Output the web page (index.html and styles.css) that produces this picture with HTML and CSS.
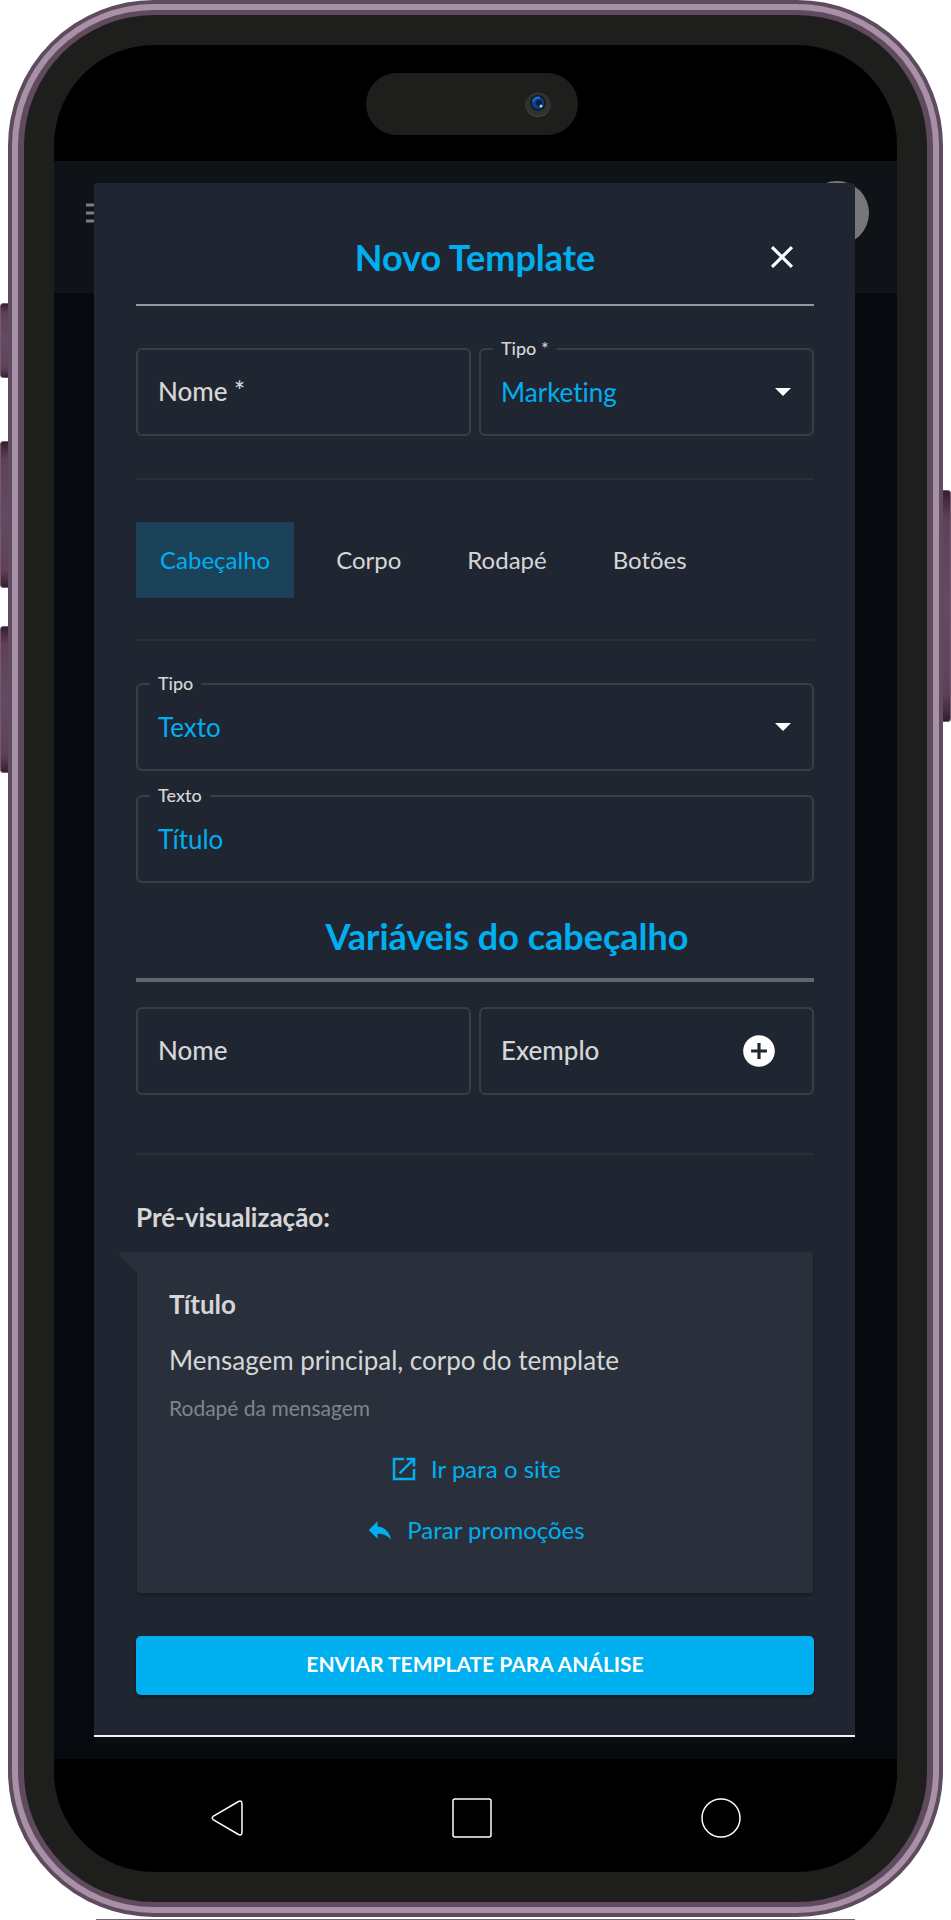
FILE: index.html
```html
<!DOCTYPE html>
<html lang="pt-BR">
<head>
<meta charset="utf-8">
<meta name="viewport" content="width=device-width, initial-scale=1">
<title>Novo Template</title>
<link rel="stylesheet" href="styles.css">
</head>
<body>
<div class="stage">
  <span class="side-key side-key-mute"></span>
  <span class="side-key side-key-up"></span>
  <span class="side-key side-key-down"></span>
  <span class="side-key side-key-power"></span>
  <div class="phone">
    <div class="rim">
      <div class="rim-inner">
        <div class="screen">
          <div class="status">
            <div class="island">
              <svg class="camera" viewBox="0 0 28 28" aria-hidden="true">
                <defs>
                  <linearGradient id="lens" x1="0" y1="0" x2="0" y2="1"><stop offset="0" stop-color="#151515"/><stop offset="1" stop-color="#4a4a49"/></linearGradient>
                </defs>
                <circle cx="14" cy="14" r="13" fill="url(#lens)"/>
                <circle cx="14" cy="14" r="12" fill="#30322f"/>
                <circle cx="14" cy="13" r="8" fill="#151c26"/>
                <circle cx="14" cy="13" r="6" fill="#0c3f8c"/>
                <circle cx="15" cy="13" r="3" fill="#071b45"/>
                <path d="M9 12a5 5 0 0 1 7-4" fill="none" stroke="#1672d8" stroke-width="2"/>
                <circle cx="17" cy="16" r="1.500" fill="#9fdcd8"/>
              </svg>
            </div>
          </div>

          <div class="app">
            <div class="appbar">
              <svg class="menu-icon" viewBox="0 0 27 20" aria-hidden="true"><path d="M0 2h27M0 10h27M0 18h27" stroke="#7c7e80" stroke-width="3"/></svg>
              <span class="avatar"></span>
            </div>

            <form class="modal">
              <header class="modal-head">
                <h1>Novo Template</h1>
                <button class="icon-button close" type="button" aria-label="Fechar">
                  <svg viewBox="0 0 24 24"><path d="M19 6.41 17.59 5 12 10.59 6.41 5 5 6.41 10.59 12 5 17.59 6.41 19 12 13.41 17.59 19 19 17.59 13.41 12z" fill="currentColor"/></svg>
                </button>
              </header>

              <div class="pair">
                <div class="field resting">
                  <input id="nome" type="text" required>
                  <label for="nome">Nome *</label>
                </div>
                <div class="field">
                  <select id="tipo"><option>Marketing</option></select>
                  <label for="tipo">Tipo *</label>
                  <svg class="arrow" viewBox="0 0 16 8" aria-hidden="true"><path d="M0 0h16L8 8z" fill="currentColor"/></svg>
                </div>
              </div>

              <hr>

              <nav class="tabs">
                <button class="tab active" type="button">Cabeçalho</button>
                <button class="tab" type="button">Corpo</button>
                <button class="tab" type="button">Rodapé</button>
                <button class="tab" type="button">Botões</button>
              </nav>

              <hr class="tabs-rule">

              <div class="stack">
                <div class="field">
                  <select id="tipo-cabecalho"><option>Texto</option></select>
                  <label for="tipo-cabecalho">Tipo</label>
                  <svg class="arrow" viewBox="0 0 16 8" aria-hidden="true"><path d="M0 0h16L8 8z" fill="currentColor"/></svg>
                </div>
                <div class="field">
                  <input id="texto" type="text" value="Título">
                  <label for="texto">Texto</label>
                </div>
              </div>

              <h2 class="section-title">Variáveis do cabeçalho</h2>

              <div class="pair variables">
                <div class="field resting">
                  <input id="var-nome" type="text">
                  <label for="var-nome">Nome</label>
                </div>
                <div class="field resting">
                  <input id="var-exemplo" type="text">
                  <label for="var-exemplo">Exemplo</label>
                  <button class="icon-button add" type="button" aria-label="Adicionar">
                    <svg viewBox="0 0 24 24"><path d="M12 2C6.480 2 2 6.480 2 12s4.480 10 10 10 10-4.480 10-10S17.520 2 12 2zm5 11h-4v4h-2v-4H7v-2h4V7h2v4h4v2z" fill="currentColor"/></svg>
                  </button>
                </div>
              </div>

              <hr class="preview-rule">

              <h3 class="preview-title">Pré-visualização:</h3>
              <section class="bubble">
                <svg class="tail" viewBox="0 0 18 22" aria-hidden="true"><path d="M3 0h15v22L1 4Q-1 0 3 0z" fill="currentColor"/></svg>
                <h4>Título</h4>
                <p class="message">Mensagem principal, corpo do template</p>
                <p class="footnote">Rodapé da mensagem</p>
                <div class="actions">
                  <a href="#site">
                    <svg viewBox="0 0 24 24" aria-hidden="true"><path d="M19 19H5V5h7V3H3v18h18v-9h-2v7zM14 3v2h3.590l-9.830 9.830 1.410 1.410L19 6.410V10h2V3h-7z" fill="currentColor"/></svg>
                    <span>Ir para o site</span>
                  </a>
                  <a href="#parar">
                    <svg viewBox="0 0 24 24" aria-hidden="true"><path d="M10 9V5l-7 7 7 7v-4.100c5 0 8.500 1.600 11 5.100-1-5-4-10-11-11z" fill="currentColor"/></svg>
                    <span>Parar promoções</span>
                  </a>
                </div>
              </section>

              <button class="submit" type="submit">ENVIAR TEMPLATE PARA ANÁLISE</button>
            </form>
          </div>

          <div class="navbar">
            <svg class="nav-back" viewBox="0 0 32 40" aria-hidden="true"><path d="M27.500 3.500 2.500 18Q0 20 2.500 22L27.500 36.500Q31 38 31 34V6Q31 2 27.500 3.500z"/></svg>
            <svg class="nav-icon" viewBox="0 0 40 40" aria-hidden="true"><rect x="1" y="1" width="38" height="38" rx="2"/></svg>
            <svg class="nav-icon" viewBox="0 0 40 40" aria-hidden="true"><circle cx="20" cy="20" r="19"/></svg>
          </div>
        </div>
      </div>
    </div>
  </div>
</div>
<div class="edge"></div>
</body>
</html>
```

FILE: styles.css
```css
* { box-sizing: border-box; }

body {
  margin: 0;
  background: #fff;
  color: #d6d6d6;
  font-family: "Futura", Lato, "Open Sans", sans-serif;
  font-size: 26px;
  font-variant-ligatures: none;
  line-height: 32px;
}

h1, h2, h3, h4, p { margin: 0; }

button, input, select { font: inherit; color: inherit; }

/* Device body */
.stage {
  position: relative;
  padding: 0 8px;
}

.phone {
  position: relative;
  border: 4px solid #5f4b5e;
  border-radius: 146px;
  background: #a891a7;
}

.rim {
  margin: 0 1px;
  padding: 6px 5px;
  border-radius: 142px;
}

.rim-inner {
  padding: 30px;
  border: 5px solid #5f4a5e;
  border-width: 5px 6px;
  border-radius: 136px;
  background: #1e1f1c;
}

.screen {
  overflow: hidden;
  border-radius: 100px;
  background: #000;
}

.side-key {
  position: absolute;
  left: 0;
  width: 12px;
  border: 1px solid #735a70;
  border-radius: 3px;
  background: linear-gradient(#35202f, #604059 12%, #634a62 50%, #604059 88%, #35202f);
}

.side-key-mute { top: 303px; height: 75px; }
.side-key-up { top: 441px; height: 147px; }
.side-key-down { top: 626px; height: 147px; }
.side-key-power { top: 490px; right: 0; left: auto; height: 232px; }

.edge {
  height: 1px;
  margin: 2px 96px 0;
  background: #75667a;
}

.status {
  display: flex;
  justify-content: center;
  height: 116px;
  padding-top: 28px;
}

.island {
  display: flex;
  align-items: center;
  justify-content: flex-end;
  width: 212px;
  height: 62px;
  margin-right: 8px;
  padding-right: 26px;
  border-radius: 31px;
  background: #1e1f1c;
}

.camera { width: 28px; height: 28px; }

/* App behind the modal */
.app {
  display: grid;
  background: #060a0e;
}

.appbar {
  display: flex;
  grid-area: 1 / 1;
  align-items: center;
  justify-content: space-between;
  align-self: start;
  height: 132px;
  padding: 20px 28px 48px 32px;
  background: #0f1318;
}

.menu-icon { width: 27px; height: 20px; }

.avatar {
  width: 64px;
  height: 64px;
  border-radius: 50%;
  background: #777;
}

/* Modal */
.modal {
  display: flex;
  z-index: 1;
  grid-area: 1 / 1;
  flex-direction: column;
  margin: 22px 42px 22px 40px;
  padding: 42px 41px 40px 42px;
  border-bottom: 2px solid #f2f3f4;
  border-radius: 4px 4px 0 0;
  background: #202631;
  box-shadow: 0 8px 0 -2px #0b0e11;
}

.modal-head {
  display: grid;
  grid-template-columns: 64px 1fr 64px;
  align-items: center;
  min-height: 81px;
  padding-bottom: 15px;
  border-bottom: 2px solid #94979c;
}

.modal-head h1,
.section-title {
  color: #00aff0;
  font-size: 36px;
  font-weight: 700;
  line-height: 60px;
  text-align: center;
}

.modal-head h1 { grid-column: 2; }

.icon-button {
  display: grid;
  place-items: center;
  padding: 0;
  border: 0;
  background: none;
  color: #fff;
}

.icon-button svg { width: 38px; height: 38px; }

.pair {
  display: grid;
  grid-template-columns: 1fr 1fr;
  gap: 8px;
  margin-top: 42px;
}

.stack { display: grid; gap: 24px; }

.field { position: relative; }

.field input,
.field select {
  display: block;
  width: 100%;
  height: 88px;
  padding: 0 20px;
  border: 2px solid #383e48;
  border-radius: 6px;
  outline: 0;
  background: transparent;
  color: #00aff0;
  appearance: none;
}

.field label {
  position: absolute;
  top: -12px;
  left: 14px;
  padding: 0 8px;
  background: #202631;
  font-size: 18px;
  font-weight: 500;
  line-height: 24px;
}

.field.resting label {
  top: 27px;
  font-size: 26px;
  line-height: 32px;
}

.arrow {
  position: absolute;
  top: 40px;
  right: 23px;
  width: 16px;
  height: 8px;
  color: #fff;
  pointer-events: none;
}

.add {
  position: absolute;
  top: 25px;
  right: 36px;
}

hr {
  width: 100%;
  height: 2px;
  margin: 42px 0;
  border: 0;
  background: #2a303a;
}

.tabs { display: flex; gap: 18px; }

.tab {
  min-height: 76px;
  padding: 0 24px;
  border: 0;
  background: none;
  font-size: 24px;
}

.tab.active {
  background: #1b4259;
  color: #00aff0;
}

.tabs-rule { margin-top: 41px; }

.section-title {
  margin-top: 23px;
  padding: 0 0 12px 64px;
  border-bottom: 4px solid #62676e;
}

.variables { margin-top: 25px; }

.preview-rule { margin: 58px 0 46px; }

.preview-title {
  font-size: 26px;
  font-weight: 700;
}

.bubble {
  position: relative;
  margin: 19px 1px 0;
  padding: 36px 32px 47px;
  border-radius: 0 4px 4px 4px;
  background: #2a303b;
  box-shadow: 0 3px 3px #191e27;
}

.tail {
  position: absolute;
  top: 0;
  right: 100%;
  width: 18px;
  height: 22px;
  color: #2a303b;
}

.bubble h4 { font-size: 26px; font-weight: 700; }

.message { margin-top: 24px; }

.footnote {
  margin-top: 16px;
  color: #80848a;
  font-size: 21px;
}

.actions {
  display: grid;
  justify-items: center;
  gap: 29px;
  margin-top: 29px;
}

.actions a {
  display: flex;
  align-items: center;
  gap: 12px;
  color: #00aff0;
  font-size: 24px;
  text-decoration: none;
}

.actions svg { width: 30px; height: 30px; }

.submit {
  min-height: 59px;
  margin-top: 43px;
  padding: 0 0 4px;
  border: 0;
  border-radius: 5px;
  background: #00aff0;
  box-shadow: 0 2px 3px #11161e;
  color: #fff;
  font-size: 21px;
  font-weight: 700;
}

/* Device navigation */
.navbar {
  display: flex;
  align-items: center;
  justify-content: space-between;
  height: 113px;
  padding: 4px 156px 0 157px;
}

.navbar svg { fill: none; stroke: #fff; stroke-width: 1.500; }

.nav-back { width: 32px; height: 40px; }

.nav-icon { width: 40px; height: 40px; }
```
